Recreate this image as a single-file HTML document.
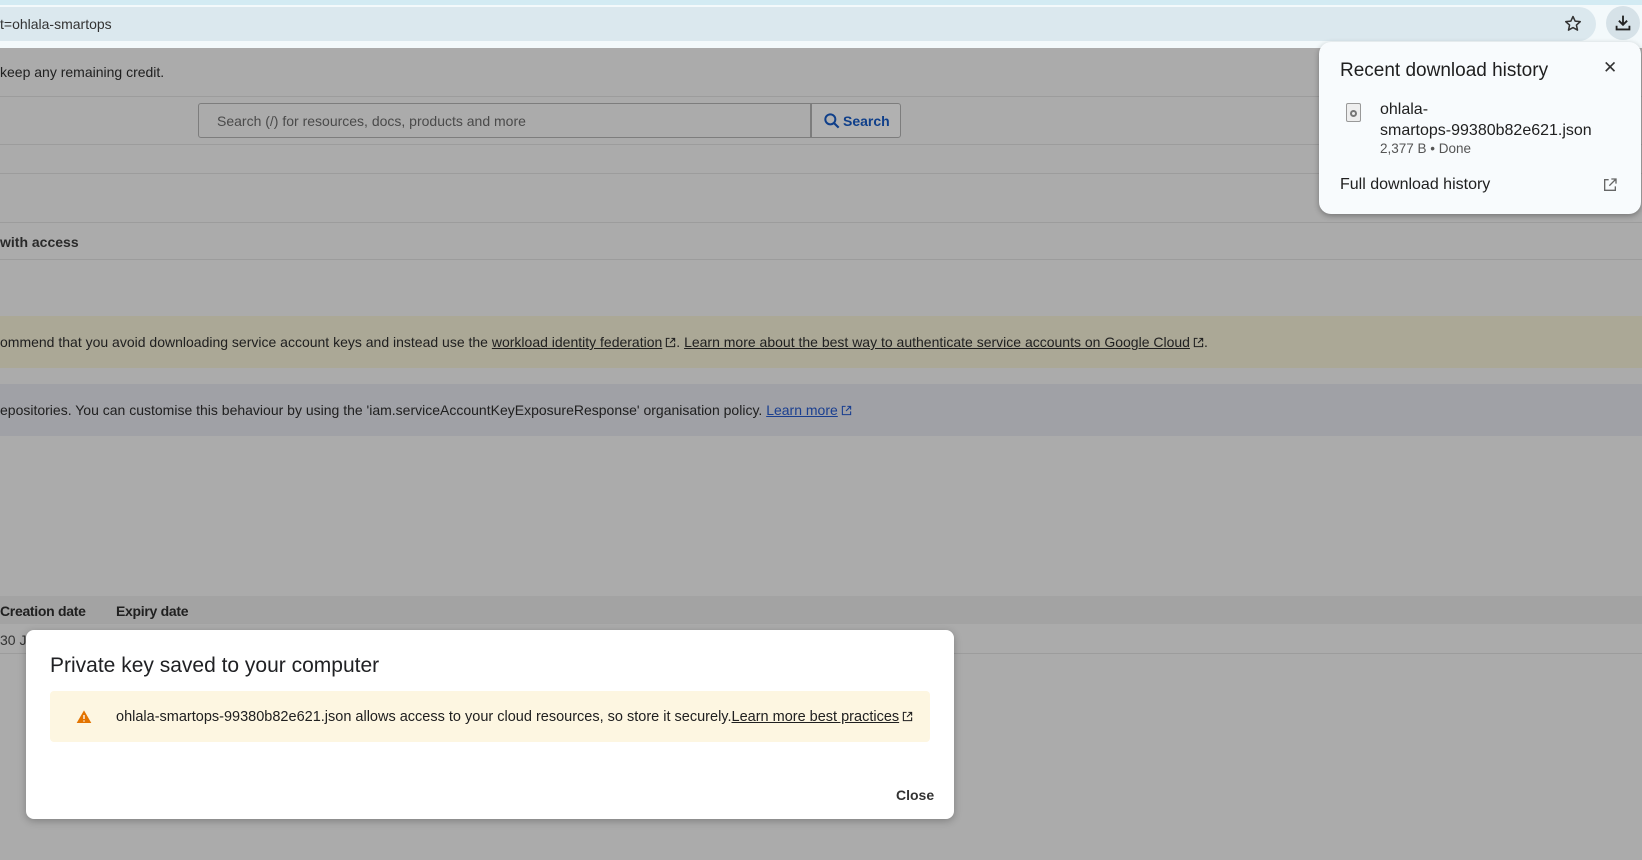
<!DOCTYPE html>
<html><head><style>
*{margin:0;padding:0;box-sizing:border-box}
body{width:1642px;height:860px;overflow:hidden;background:#ababab;font-family:"Liberation Sans",Arial,sans-serif;position:relative;color:#1f1f1f}
.abs{position:absolute}
.t{position:absolute;font-size:14.5px;color:#202020;white-space:nowrap}
.line{position:absolute;left:0;right:0;height:1px;background:#9c9c9c}
a{color:#202020;text-decoration:underline}
.ex{display:inline-block;width:11px;height:11px;vertical-align:-1px;margin-left:3px}
</style></head><body>
<svg width="0" height="0" style="position:absolute"><symbol id="ex" viewBox="0 0 12 12"><path d="M5 1.5H1.5v9h9V7M7 1.5h3.5V5M10.5 1.5L5.5 6.5" fill="none" stroke="currentColor" stroke-width="1.2"/></symbol></svg>
<!-- browser chrome -->
<div class="abs" style="left:0;top:0;width:1642px;height:48px;background:#f3f9fb;border-top:5px solid #d3ebf3"></div>
<div class="abs" style="left:-30px;top:7px;width:1626px;height:34px;border-radius:17px;background:#dbe8ee"></div>
<div class="t" style="left:0;top:16px;font-size:14px;color:#333">t=ohlala-smartops</div>
<svg class="abs" style="left:1563px;top:14px" width="20" height="20" viewBox="0 0 24 24"><path d="M12 3l2.6 5.6 6.1.6-4.6 4.1 1.3 6L12 16.3 6.6 19.3l1.3-6L3.3 9.2l6.1-.6z" fill="none" stroke="#333" stroke-width="1.8" stroke-linejoin="round"/></svg>
<div class="abs" style="left:1606px;top:6px;width:34px;height:34px;border-radius:50%;background:#d6e2e8"></div>
<svg class="abs" style="left:1612px;top:12px" width="22" height="22" viewBox="0 0 24 24"><path d="M12 4v10M7.5 9.5L12 14l4.5-4.5M5 15v4h14v-4" fill="none" stroke="#222" stroke-width="2"/></svg>

<!-- page (dimmed) -->
<div class="t" style="left:0;top:64px;font-size:14px">keep any remaining credit.</div>
<div class="line" style="top:96px"></div>
<div class="abs" style="left:198px;top:103px;width:613px;height:35px;border:1px solid #7d7d7d;border-radius:3px 0 0 3px;background:#ababab"></div>
<div class="t" style="left:217px;top:113px;color:#4a4a4a;font-size:14px">Search (/) for resources, docs, products and more</div>
<div class="abs" style="left:811px;top:103px;width:90px;height:35px;border:1px solid #7d7d7d;border-radius:0 3px 3px 0;background:#b1b1b1"></div>
<svg class="abs" style="left:822px;top:111px" width="20" height="20" viewBox="0 0 24 24"><circle cx="10" cy="10" r="6" fill="none" stroke="#0f3f8a" stroke-width="2.4"/><path d="M14.5 14.5L20 20" stroke="#0f3f8a" stroke-width="2.6"/></svg>
<div class="t" style="left:843px;top:113px;color:#0f3f8a;font-weight:bold;font-size:14px">Search</div>
<div class="line" style="top:144px"></div>
<div class="line" style="top:173px"></div>
<div class="line" style="top:222px"></div>
<div class="t" style="left:0;top:234px;font-weight:bold;color:#2a2a2a;font-size:14px">with access</div>
<div class="line" style="top:259px"></div>
<div class="abs" style="left:0;top:316px;width:1642px;height:52px;background:#aba896"></div>
<div class="t" style="left:0;top:334px;font-size:14px">ommend that you avoid downloading service account keys and instead use the <a>workload identity federation</a><svg class="ex"><use href="#ex"/></svg>. <a>Learn more about the best way to authenticate service accounts on Google Cloud</a><svg class="ex"><use href="#ex"/></svg>.</div>
<div class="abs" style="left:0;top:384px;width:1642px;height:52px;background:#a0a1a6"></div>
<div class="t" style="left:0;top:402px;font-size:14px">epositories. You can customise this behaviour by using the 'iam.serviceAccountKeyExposureResponse' organisation policy. <a style="color:#1a3f90">Learn more</a><svg class="ex" style="color:#1a3f90"><use href="#ex"/></svg></div>
<div class="abs" style="left:0;top:596px;width:1642px;height:28px;background:#a3a3a3"></div>
<div class="t" style="left:0;top:603px;font-weight:bold;font-size:14px;letter-spacing:-0.3px">Creation date</div>
<div class="t" style="left:116px;top:603px;font-weight:bold;font-size:14px;letter-spacing:-0.3px">Expiry date</div>
<div class="line" style="top:653px"></div>
<div class="t" style="left:0;top:632px;color:#333;font-size:14px">30 Ja</div>

<!-- dialog -->
<div class="abs" style="left:26px;top:630px;width:928px;height:189px;background:#fff;border-radius:8px;box-shadow:0 2px 8px rgba(0,0,0,.25)"></div>
<div class="t" style="left:50px;top:654px;font-size:21px;color:#202124">Private key saved to your computer</div>
<div class="abs" style="left:50px;top:691px;width:880px;height:51px;background:#fdf6e1;border-radius:4px"></div>
<svg class="abs" style="left:76px;top:709px" width="16" height="16" viewBox="0 0 24 24"><path d="M12 2L23 21H1z" fill="#e37400"/><path d="M12 9v6M12 17v2" stroke="#fff" stroke-width="2"/></svg>
<div class="t" style="left:116px;top:709px;font-size:14.5px">ohlala-smartops-99380b82e621.json allows access to your cloud resources, so store it securely.<a>Learn more best practices</a><svg class="ex"><use href="#ex"/></svg></div>
<div class="t" style="left:896px;top:787px;font-weight:bold;color:#333;font-size:14px">Close</div>

<!-- download popup -->
<div class="abs" style="left:1319px;top:42px;width:322px;height:172px;background:#f8fbfd;border-radius:12px;box-shadow:0 2px 6px rgba(0,0,0,.3)"></div>
<div class="t" style="left:1340px;top:60px;font-size:19px;color:#1f1f1f">Recent download history</div>
<div class="t" style="left:1603px;top:58px;font-size:17px;color:#333">✕</div>
<div class="abs" style="left:1346px;top:103px;width:15px;height:19px;border:1px solid #999;border-radius:2px;background:#eee"></div>
<div class="abs" style="left:1350px;top:110px;width:7px;height:7px;border:2px solid #777;border-radius:50%"></div>
<div class="t" style="left:1380px;top:99px;font-size:16px;line-height:21px">ohlala-<br>smartops-99380b82e621.json</div>
<div class="t" style="left:1380px;top:141px;font-size:13.5px;color:#555">2,377 B • Done</div>
<div class="t" style="left:1340px;top:176px;font-size:16px">Full download history</div>
<svg class="abs" style="left:1602px;top:177px" width="16" height="16" viewBox="0 0 24 24"><path d="M10 4H4v16h16v-6M14 3h7v7M21 3L11 13" fill="none" stroke="#666" stroke-width="2"/></svg>
</body></html>
